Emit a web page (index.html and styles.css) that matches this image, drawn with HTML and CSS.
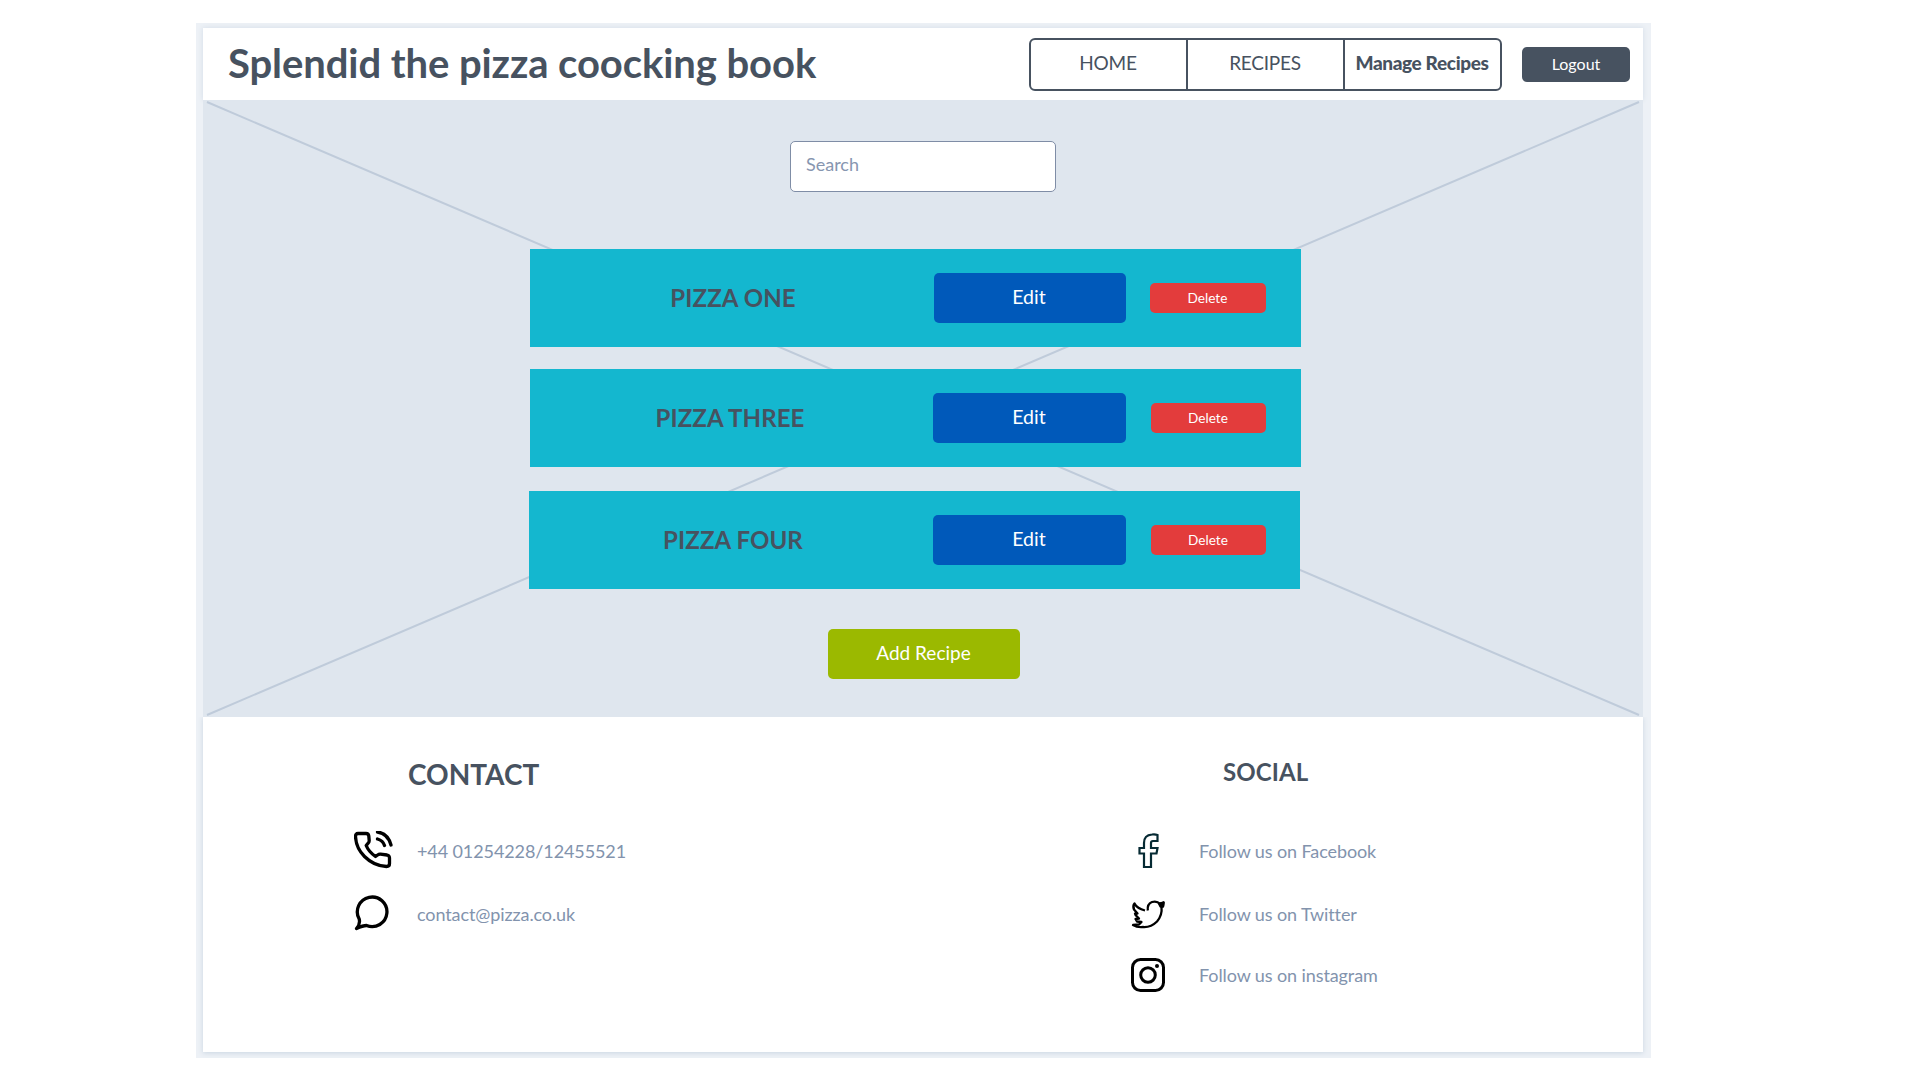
FILE: index.html
```html
<!DOCTYPE html>
<html lang="en">
<head>
<meta charset="utf-8">
<title>Splendid the pizza coocking book</title>
<link rel="stylesheet" href="styles.css">
</head>
<body>
<div class="page">
  <header class="header">
    <h1 class="title">Splendid the pizza coocking book</h1>
    <nav class="nav">
      <a class="nav-item">HOME</a>
      <a class="nav-item">RECIPES</a>
      <a class="nav-item nav-current">Manage Recipes</a>
    </nav>
    <button class="logout">Logout</button>
  </header>

  <main class="hero">
    <svg class="hero-lines" viewBox="0 0 1440 617"><path d="M4 2 1436 615M1436 2 4 615"/></svg>
    <input class="search" type="text" placeholder="Search">
    <section class="recipes">
      <article class="recipe recipe-one">
        <h2 class="recipe-name">PIZZA ONE</h2>
        <button class="edit">Edit</button>
        <button class="delete">Delete</button>
      </article>
      <article class="recipe recipe-three">
        <h2 class="recipe-name">PIZZA THREE</h2>
        <button class="edit">Edit</button>
        <button class="delete">Delete</button>
      </article>
      <article class="recipe recipe-four">
        <h2 class="recipe-name">PIZZA FOUR</h2>
        <button class="edit">Edit</button>
        <button class="delete">Delete</button>
      </article>
    </section>
    <button class="add">Add Recipe</button>
  </main>

  <footer class="footer">
    <section class="contact">
      <h2 class="contact-title">CONTACT</h2>
      <ul class="links">
        <li class="link">
          <svg class="icon" viewBox="0 0 40 40" fill="none" stroke="#000" stroke-width="3.300" stroke-linecap="round" stroke-linejoin="round"><path d="M4 2.500H12Q14.500 2.500 14.800 5L15.200 9.500Q15.300 11 14 12.300L12.200 14.500Q14.500 20.500 21.500 25.500L23.600 24Q25 23 26.500 23.200L33 24Q35.500 24.500 35.500 27V32.500Q35.500 35.500 32.500 35.500Q20 35 10.500 25.500Q2 17 1.500 5.500Q1.500 2.500 4 2.500ZM23.500 1Q34 2.500 37 14M23.500 8Q29 9.500 30.500 14.500"/></svg>
          <span>+44 01254228/12455521</span>
        </li>
        <li class="link">
          <svg class="icon" viewBox="0 0 40 40" fill="none" stroke="#000" stroke-width="3.300" stroke-linejoin="round"><path d="M2.500 34.500Q6.500 30 5.200 25A14.800 14.800 0 1 1 12.500 31.500Q9 31.500 2.500 34.500Z"/></svg>
          <span>contact@pizza.co.uk</span>
        </li>
      </ul>
    </section>
    <section class="social">
      <h2 class="social-title">SOCIAL</h2>
      <ul class="links">
        <li class="link">
          <svg class="icon" viewBox="0 0 40 40" fill="none" stroke="#062a33" stroke-width="2.200"><path d="M27.500 3V9H23Q21 9 21 11V16H27.500L26.500 21.500H21V35H14V21.500H9.500V16H14V11Q14 3 22 2.500Q25 2 27.500 3Z"/></svg>
          <span>Follow us on Facebook</span>
        </li>
        <li class="link">
          <svg class="icon" viewBox="0 0 40 40" fill="none" stroke="#000" stroke-width="2.300" stroke-linejoin="round"><path d="M17.800 15.500Q17 9 22 7Q27 5.500 30 9L33.500 7.500 33 11 31.500 12Q32.500 20 27 26.500Q21 32.500 13 32Q7 32.500 3 30L9 29.500 11.500 27 7 26.500 5.500 24 9 23.500 5.500 20 5 18.500 7.500 18.500 4 14.500Q2.500 11 4.500 8.500Q7 13.500 15 15.500"/><path d="M29 8.500 33.500 7.500 33 11.500 30.500 11.500Z" fill="#000"/></svg>
          <span>Follow us on Twitter</span>
        </li>
        <li class="link">
          <svg class="icon" viewBox="0 0 40 40" fill="none" stroke="#000" stroke-width="3"><rect x="2.500" y="3.500" width="31" height="31" rx="8"/><circle cx="18" cy="19" r="7.300"/><circle cx="27" cy="10" r="2" fill="#000" stroke="none"/></svg>
          <span>Follow us on instagram</span>
        </li>
      </ul>
    </section>
  </footer>
</div>
</body>
</html>
```
FILE: styles.css
```css
* { box-sizing: border-box; margin: 0; padding: 0; }

body {
  background: #fff;
  color: #475260;
  font-family: Lato, "Liberation Sans", sans-serif;
  line-height: 1.2;
}

button { border: 0; border-radius: 5px; font-family: inherit; color: #fff; display: flex; align-items: center; justify-content: center; }
ul { list-style: none; }

.page {
  width: 1455px;
  height: 1035px;
  margin: 23px 0 0 196px;
  padding: 5px 8px 6px 7px;
  background: #edf1f6;
}

.header {
  display: flex;
  height: 72px;
  align-items: center;
  background: #fff;
  padding: 0 13px 0 25px;
  box-shadow: 0 0 5px #d3dce7;
}
.title { font-size: 40px; font-weight: 700; letter-spacing: -0.08px; margin-right: auto; padding-bottom: 3px; white-space: nowrap; }

.nav {
  display: flex;
  width: 473px;
  height: 53px;
  border: 2px solid #475260;
  border-radius: 6px;
  margin-right: 20px;
}
.nav-item { flex: 1 1 0; min-width: 0; display: flex; align-items: center; justify-content: center; padding: 0 1px 1px 0; font-size: 19px; letter-spacing: -0.25px; }
.nav-item + .nav-item { border-left: 2px solid #475260; }
.nav-current { font-weight: 900; white-space: nowrap; letter-spacing: -0.35px; }
.logout { width: 108px; height: 35px; padding-bottom: 2px; background: #475260; font-size: 16px; }

.hero {
  position: relative;
  display: flex;
  flex-direction: column;
  align-items: flex-start;
  height: 617px;
  background: #dfe6ee;
}
.hero-lines { position: absolute; inset: 0; width: 1440px; height: 617px; fill: none; stroke: #bfcbda; stroke-width: 2; }
.hero > :not(.hero-lines) { position: relative; }

.search {
  width: 266px;
  height: 51px;
  margin: 41px 0 57px 587px;
  padding: 0 15px 5px;
  border: 1px solid #7f8da6;
  border-radius: 5px;
  background: #fff;
  font: 18px Lato, sans-serif;
}
.search::placeholder { color: #8796b0; opacity: 1; }

.recipes { display: flex; flex-direction: column; margin-left: 327px; }
.recipe { display: flex; align-items: center; width: 771px; height: 98px; background: #14b7cf; }
.recipe-name { width: 403px; padding-right: 3px; text-align: center; font-size: 24px; font-weight: 700; letter-spacing: 0.1px; }
.edit { width: 193px; height: 50px; margin-right: 25px; padding: 0 1px 4px 0; background: #0059ba; font-size: 19.5px; }
.delete { width: 115px; height: 30px; padding: 0 1px 1px 0; background: #e33c3c; font-size: 13.6px; }
.recipe-one .recipe-name { width: 404px; padding: 0 0 0 2px; }
.recipe-one .edit { width: 192px; margin-right: 24px; padding-right: 2px; }
.recipe-one .delete { width: 116px; }
.recipe-three { margin-top: 22px; }
.recipe-four { margin: 24px 0 0 -1px; }
.recipe-four .recipe-name { width: 404px; padding: 0 0 0 4px; }

.add { width: 192px; height: 50px; margin: 40px 0 0 625px; padding: 0 1px 3px 0; background: #9bb900; font-size: 19px; }

.footer { display: flex; height: 335px; background: #fff; box-shadow: 0 1px 5px #cad5e1; clip-path: inset(0 -8px -6px -7px); }
.contact { width: 777px; padding: 41px 0 0 149px; }
.social { padding: 41px 0 0 149px; }
.contact-title, .social-title { font-weight: 700; }
.contact-title { height: 71px; padding-left: 56px; font-size: 28px; }
.social-title { height: 71px; padding-left: 94px; font-size: 24px; letter-spacing: 0.1px; }
.link { display: flex; height: 63px; padding-top: 12px; font-size: 18px; letter-spacing: -0.1px; color: #8293ad; }
.link + .link { height: 61px; }
.icon { width: 40px; height: 40px; flex: none; margin: -10px 23px 0 2px; }
.social .icon { margin: -9.5px 29px 0 1px; }
```
